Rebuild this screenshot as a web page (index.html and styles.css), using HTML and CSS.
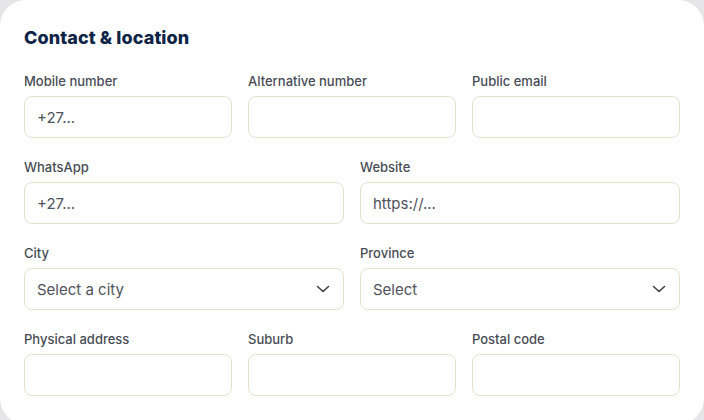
FILE: index.html
```html
<!DOCTYPE html>
<html lang="en">
<head>
<meta charset="utf-8">
<title>Contact &amp; location</title>
<link rel="stylesheet" href="styles.css">
</head>
<body>
<section class="card">
  <h2 class="title">Contact &amp; location</h2>
  <div class="row three">
    <div class="field"><label class="label">Mobile number</label><div class="input">+27...</div></div>
    <div class="field"><label class="label">Alternative number</label><div class="input"></div></div>
    <div class="field"><label class="label">Public email</label><div class="input"></div></div>
  </div>
  <div class="row two">
    <div class="field"><label class="label">WhatsApp</label><div class="input">+27...</div></div>
    <div class="field"><label class="label">Website</label><div class="input">https://...</div></div>
  </div>
  <div class="row two">
    <div class="field"><label class="label">City</label><div class="input select"><span>Select a city</span><svg class="chev" width="14" height="8" viewBox="0 0 14 8"><path d="M1.5 1.5 L7 6.5 L12.5 1.5" fill="none" stroke="#3d4148" stroke-width="1.6" stroke-linecap="round" stroke-linejoin="round"/></svg></div></div>
    <div class="field"><label class="label">Province</label><div class="input select"><span>Select</span><svg class="chev" width="14" height="8" viewBox="0 0 14 8"><path d="M1.5 1.5 L7 6.5 L12.5 1.5" fill="none" stroke="#3d4148" stroke-width="1.6" stroke-linecap="round" stroke-linejoin="round"/></svg></div></div>
  </div>
  <div class="row three">
    <div class="field"><label class="label">Physical address</label><div class="input"></div></div>
    <div class="field"><label class="label">Suburb</label><div class="input"></div></div>
    <div class="field"><label class="label">Postal code</label><div class="input"></div></div>
  </div>
</section>
</body>
</html>
```

FILE: styles.css
```css
html, body {
  margin: 0;
  padding: 0;
}
body {
  background: #e6e6e8;
  width: 704px;
  height: 420px;
  overflow: hidden;
  font-family: Inter, "Noto Sans", sans-serif;
}
.card {
  box-sizing: border-box;
  width: 704px;
  height: 424px;
  background: #ffffff;
  border-radius: 26px;
  padding: 24px 24px 0 24px;
}
.title {
  margin: 0 0 20px 0;
  font-size: 18px;
  line-height: 28px;
  font-weight: 800;
  color: #0e2447;
  letter-spacing: 0.1px;
}
.row {
  display: grid;
  column-gap: 16px;
  margin-bottom: 20px;
}
.three { grid-template-columns: repeat(3, 1fr); }
.two { grid-template-columns: repeat(2, 1fr); }
.field {
  display: flex;
  flex-direction: column;
}
.label {
  font-size: 13px;
  line-height: 18px;
  font-weight: 500;
  color: #474c54;
  margin-bottom: 6px;
}
.input {
  box-sizing: border-box;
  height: 42px;
  border: 1px solid #e5dfcd;
  border-radius: 8px;
  padding: 0 12px;
  display: flex;
  align-items: center;
  font-size: 15px;
  color: #4f535a;
}
.select {
  justify-content: space-between;
  padding-right: 13px;
}
.chev {
  display: block;
}
```
